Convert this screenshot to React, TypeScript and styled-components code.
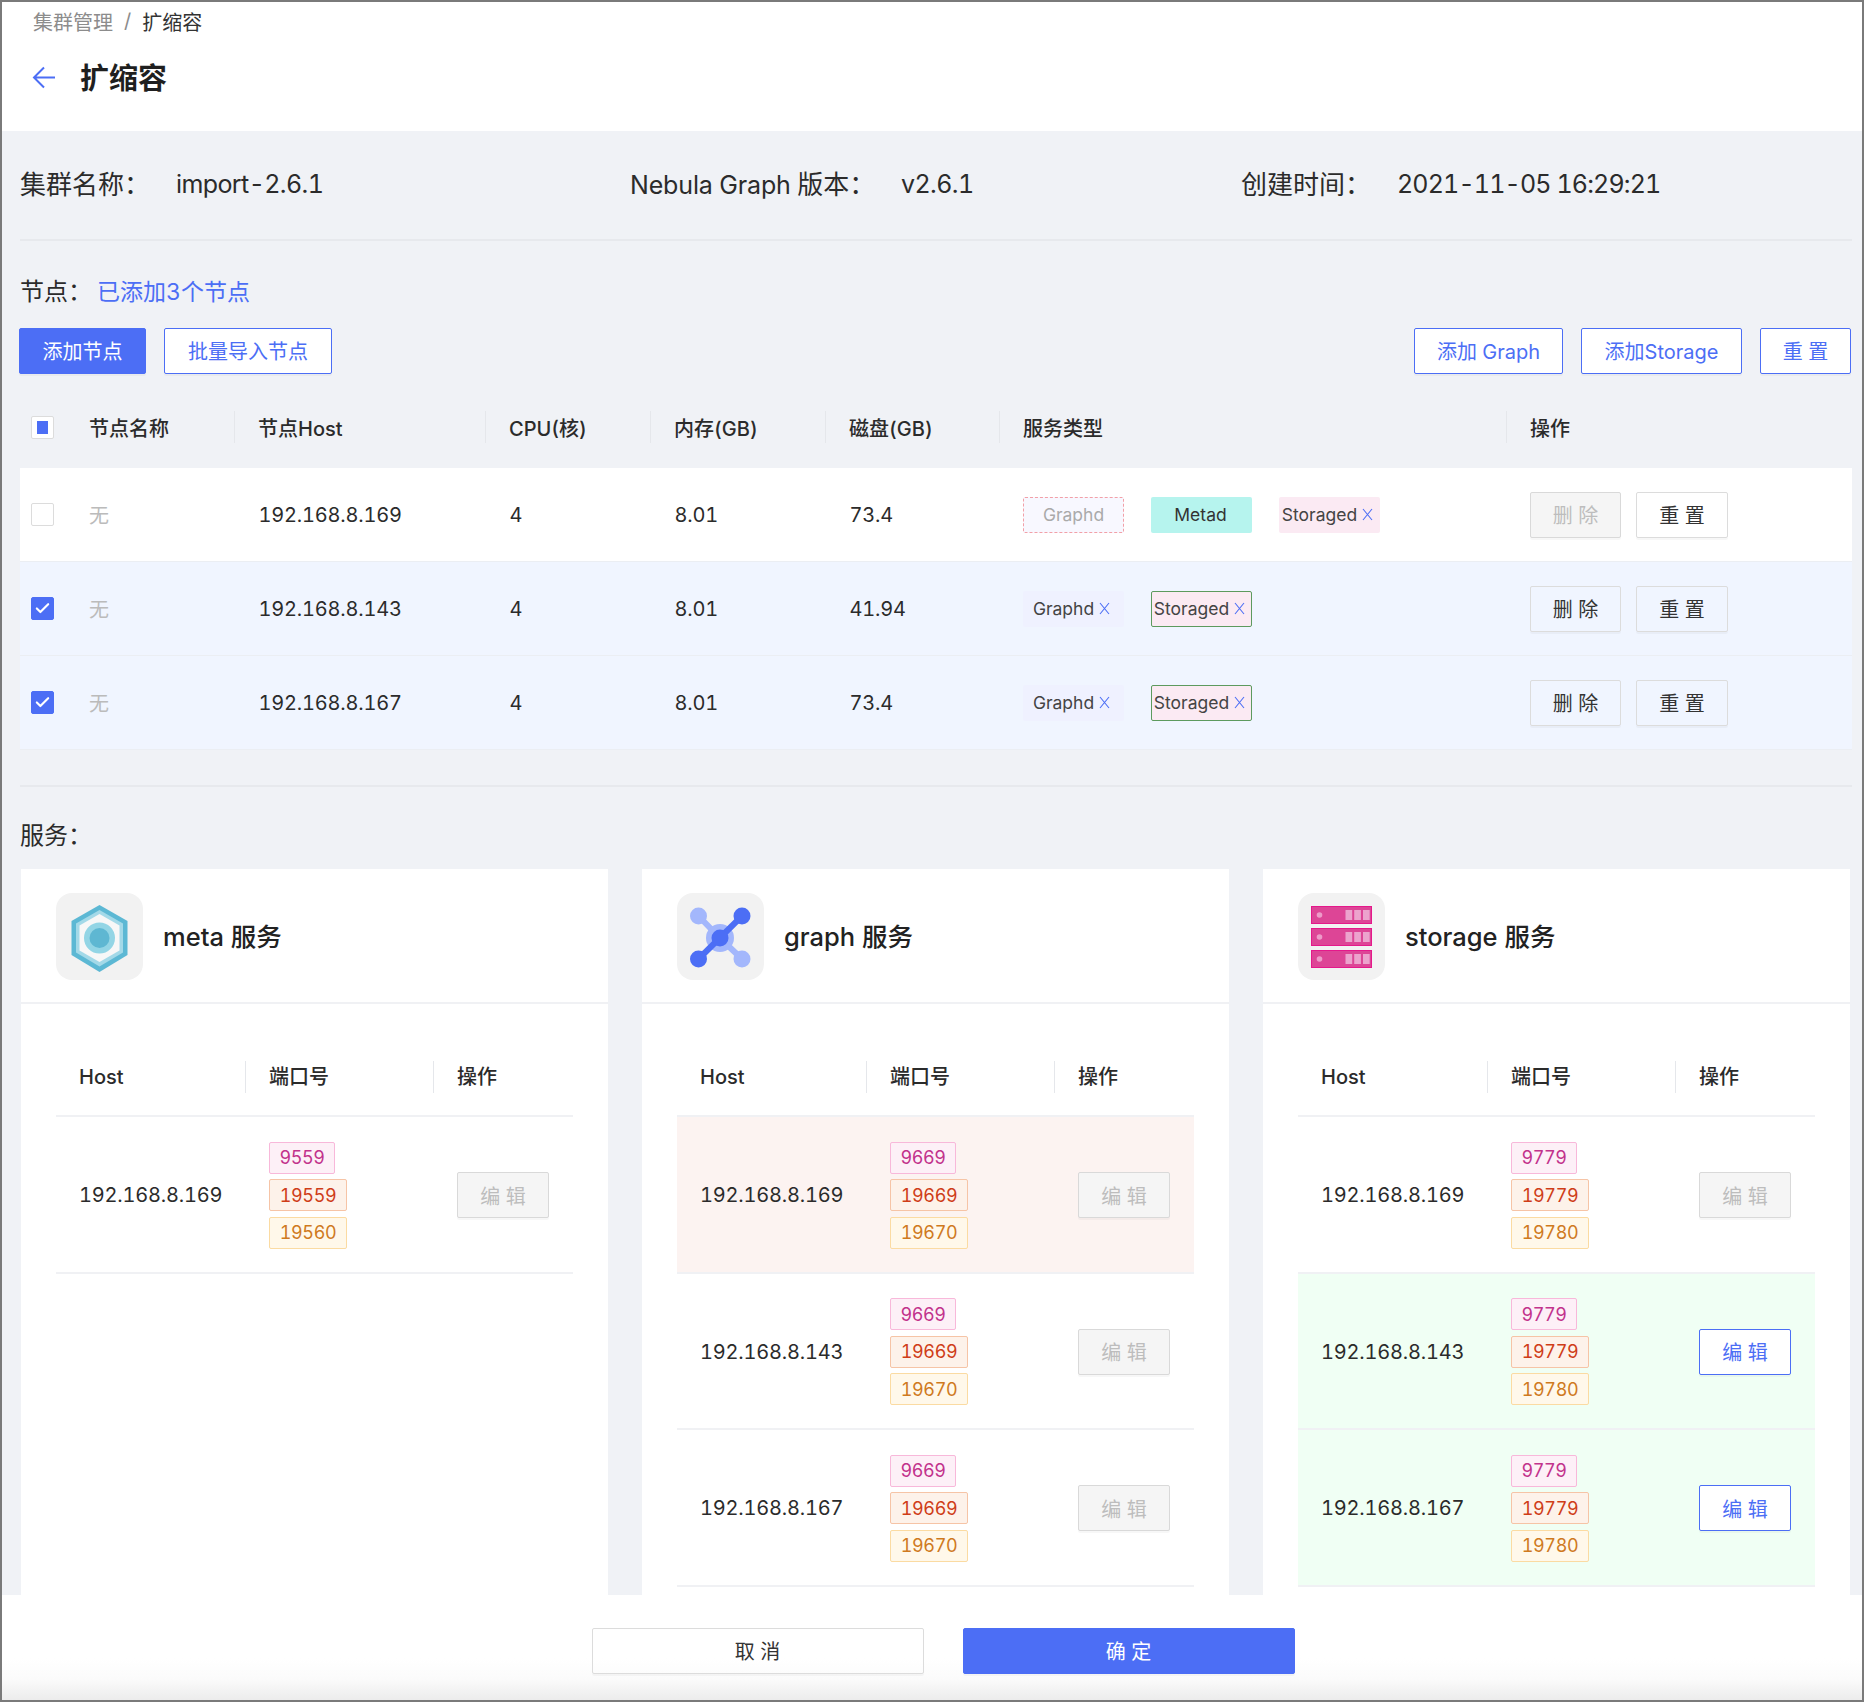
import React from "react";
import styled, { createGlobalStyle, css } from "styled-components";
import { Check } from "lucide-react";

const Global = createGlobalStyle`
  html, body { margin: 0; padding: 0; }
  body {
    font-family: Inter, "Noto Sans CJK SC", sans-serif; color: #222; background: #fff;
    font-variant-numeric: tabular-nums;
  }
  * { box-sizing: border-box; }
`;

const primary = "#4c6ef5";

const Page = styled.div`
  width: 1864px; height: 1702px; display: flex; flex-direction: column; overflow: hidden;
  border: 2px solid #7a7a7a; background: #fff;
`;
const Head = styled.header`height: 129px; flex: none; padding: 5px 0 0 31px; background: #fff;`;
const Crumbs = styled.div`display: flex; align-items: center; gap: 11px; height: 28px; font-size: 20px; color: #8c8c8c;`;
const CrumbNow = styled.span`color: #333;`;
const TitleRow = styled.div`display: flex; align-items: center; gap: 24px; margin-top: 23px; height: 42px;`;
const Title = styled.h1`margin: 0; font-size: 29px; font-weight: 600; color: #1f1f1f; line-height: 42px;`;

const Main = styled.main`
  flex: 1; min-height: 0; overflow: hidden; display: flex; flex-direction: column;
  background: #f0f2f6; padding: 0 10px 0 18px;
`;
const InfoRow = styled.section`
  flex: none; height: 110px; padding-bottom: 3px; display: grid; grid-template-columns: 610px 611px 1fr; align-items: center;
  border-bottom: 2px solid #e7e9ed; font-size: 26px; color: #2b2b2b;
`;
const InfoItem = styled.div`display: flex; align-items: center;`;
const InfoLabel = styled.span<{ $w: number }>`width: ${p => p.$w}px; flex: none; padding-bottom: 2px;`;
const InfoValue = styled.span<{ $tight?: boolean }>`font-size: 25px; letter-spacing: ${p => (p.$tight ? -0.85 : -0.6)}px;`;
const InfoLatin = styled.span`font-size: 25px; letter-spacing: -0.15px;`;
const SectionTitle = styled.div<{ $top: number }>`
  flex: none; margin-top: ${p => p.$top}px; height: 30px; line-height: 30px; font-size: 24px; color: #2b2b2b;
`;
const Accent = styled.span`color: ${primary}; font-size: 23px; margin-left: 5px;`;
const Toolbar = styled.div`
  flex: none; display: flex; justify-content: space-between; margin: 21px 0 0 -1px; padding-right: 1px;
  button { padding-bottom: 2px; }
`;
const ButtonGroup = styled.div<{ $gap: number }>`display: flex; gap: ${p => p.$gap}px;`;

const Btn = styled.button<{ $kind?: "primary" | "outline" | "plain" | "disabled"; $w: number }>`
  width: ${p => p.$w}px; height: 46px; padding: 0; border-radius: 2px; font: inherit; font-size: 20px; white-space: pre;
  box-shadow: 0 2px 0 rgba(0,0,0,.03);
  ${p => {
    switch (p.$kind) {
      case "primary": return css`background: ${primary}; border: 1px solid ${primary}; color: #fff;`;
      case "outline": return css`background: #fff; border: 1.5px solid ${primary}; color: ${primary};`;
      case "disabled": return css`background: #f5f5f5; border: 1.5px solid #d9d9d9; color: #bdbdbd;`;
      default: return css`background: transparent; border: 1.5px solid #dcdcdc; color: #333;`;
    }
  }}
`;

const nodeCols = "214px 251px 165px 175px 174px 507px 1fr";
const NodeHead = styled.div`
  flex: none; margin-top: 12px; height: 82px; display: grid; grid-template-columns: ${nodeCols}; align-items: center;
  font-size: 20px; font-weight: 500; color: #2b2b2b;
`;
const HeadCell = styled.div`
  height: 32px; line-height: 32px; padding-left: 23px; display: flex; align-items: center;
  border-left: 1px solid #e5e7eb;
`;
const NodeHeadCell = styled(HeadCell)`padding: 4px 0 0 23px;`;
const FirstCell = styled.div`display: flex; align-items: center; gap: 35px; padding-left: 11px;`;
const NodeRow = styled.div<{ $sel: boolean }>`
  flex: none; height: 94px; display: grid; grid-template-columns: ${nodeCols}; align-items: center;
  font-size: 20px; letter-spacing: -0.2px; color: #2b2b2b; background: ${p => (p.$sel ? "#f0f5ff" : "#fff")}; border-bottom: 1px solid #ebeef3;
`;
const Cell = styled.div`padding-left: 24.5px; display: flex; align-items: center;`;
const Muted = styled.span`color: #bbb; width: 20px;`;
const Box = styled.span<{ $on?: boolean }>`
  width: 23px; height: 23px; border-radius: 2px; display: flex; align-items: center; justify-content: center; flex: none;
  background: ${p => (p.$on ? primary : "#fff")}; border: 1.5px solid ${p => (p.$on ? primary : "#dcdcdc")};
`;
const BoxDot = styled.span`width: 11px; height: 13px; background: ${primary};`;
const Tags = styled.div`padding-left: 24px; display: flex; gap: 27px;`;
const Tag = styled.span<{ $kind: "ghost" | "meta" | "graph" | "storage" | "storageOn" }>`
  width: 101px; height: 36px; display: flex; align-items: center; justify-content: center; gap: 5px;
  font-size: 17.5px; letter-spacing: 0; border-radius: 2px; color: #444;
  ${p => {
    switch (p.$kind) {
      case "ghost": return css`background: #f8f8ff; border: 1.5px dashed #f2a0a8; color: #aaa;`;
      case "meta": return css`background: #b6f4ee; color: #333; padding-right: 2px;`;
      case "graph": return css`background: #eff1ff;`;
      case "storage": return css`background: #fbeaf3;`;
      default: return css`background: #fbeaf3; border: 1.5px solid #5d9a5e;`;
    }
  }}
`;
const Ops = styled.div`padding-left: 24px; display: flex; gap: 15px;`;
const Rule = styled.div`flex: none; margin-top: 35px; height: 2px; background: #e7e9ed;`;

const Cards = styled.section`flex: 1; min-height: 0; margin: 18px 0 0 1px; display: grid; grid-template-columns: repeat(3, 587px); gap: 34px;`;
const Card = styled.article`background: #fff; min-height: 0; overflow: hidden;`;
const CardHead = styled.div`height: 135px; padding: 24px 35px 0; display: flex; gap: 20px; border-bottom: 2px solid #f0f1f4;`;
const Logo = styled.div`width: 87px; height: 87px; border-radius: 16px; background: #f2f2f2; flex: none;`;
const LogoSvg = styled.svg`display: block;`;
const CardTitle = styled.div`height: 87px; line-height: 87px; font-size: 25.5px; font-weight: 500; color: #222;`;
const CardBody = styled.div`padding: 34px 35px 0;`;
const svcCols = "189px 188px 1fr";
const SvcHead = styled.div`
  height: 79px; display: grid; grid-template-columns: ${svcCols}; align-items: center; font-size: 20px; font-weight: 500;
  border-bottom: 2px solid #f0f1f4; color: #2b2b2b;
`;
const SvcRow = styled.div<{ $tone?: "none" | "pink" | "green" }>`
  height: 156.6px; padding-top: 2px; display: grid; grid-template-columns: ${svcCols}; align-items: center; font-size: 20px; letter-spacing: -0.2px; color: #2b2b2b;
  border-bottom: 2px solid #f0f1f4;
  background: ${p => (p.$tone === "pink" ? "#fcf3f1" : p.$tone === "green" ? "#f0fff4" : "#fff")};
`;
const SvcCell = styled.div`padding-left: 23px;`;
const EditCell = styled.div`padding-left: 24px;`;
const Ports = styled.div`display: flex; flex-direction: column; align-items: flex-start; gap: 5.5px; padding-left: 24px;`;
const Port = styled.span<{ $c: "pink" | "orange" | "yellow"; $w: number }>`
  width: ${p => p.$w}px; height: 32px; display: flex; align-items: center; justify-content: center; font-size: 18px; letter-spacing: -0.4px; border-radius: 2px;
  ${p => p.$c === "pink"
    ? css`background: #fdf0f7; border: 1.5px solid #f8b8da; color: #c2338c;`
    : p.$c === "orange"
      ? css`background: #fdf2ea; border: 1.5px solid #f6c4a6; color: #cf3d18;`
      : css`background: #fff8ea; border: 1.5px solid #fbdba2; color: #cf7a1e;`}
`;

const Footer = styled.footer`
  flex: none; height: 105px; display: flex; justify-content: center; gap: 39px; padding: 33px 0 0 22px;
  background: linear-gradient(to bottom, #fff 0, #fff 60%, #fbfbfb 80%, #ececec 100%);
  button { padding-bottom: 2px; }
`;

const CloseX = styled.svg`flex: none; margin-right: 4px;`;
const X = () => (
  <CloseX width="11" height="13" viewBox="0 0 11 13" fill="none" stroke={primary} strokeWidth="1.1">
    <path d="M1 1l9 11M10 1L1 12" />
  </CloseX>
);

const BackSvg = styled.svg`flex: none; margin: -4px 0 0 -1px;`;
const BackArrow = () => (
  <BackSvg width="24" height="24" viewBox="0 0 24 24" fill="none" stroke={primary} strokeWidth="2">
    <path d="M23 12.5H2M12 2.5 2 12.5l10 10" />
  </BackSvg>
);

const MetaIcon = () => (
  <LogoSvg width="87" height="87" viewBox="0 0 87 87">
    <polygon points="43.5,12 71.5,28 71.5,62 43.5,79 15.5,62 15.5,28" fill="#5cb8d4" />
    <polygon points="43.5,17 67,30.5 67,59.5 43.5,73.5 20,59.5 20,30.5" fill="#a3d9e8" />
    <polygon points="43.5,21 63.5,32.5 63.5,57.5 43.5,69 23.5,57.5 23.5,32.5" fill="#f7f7f7" />
    <circle cx="43.5" cy="45" r="15.5" fill="#93d5e5" />
    <circle cx="43.5" cy="45" r="10" fill="#5eb7d2" />
  </LogoSvg>
);

const GraphIcon = () => (
  <LogoSvg width="87" height="87" viewBox="0 0 87 87">
    <path d="M21.5 23 43 45 65 66" stroke="#a3b7fc" strokeWidth="6" fill="none" />
    <circle cx="21.5" cy="23" r="8.5" fill="#a3b7fc" />
    <circle cx="65" cy="66" r="8.5" fill="#a3b7fc" />
    <circle cx="43" cy="45" r="14" fill="#a3b7fc" />
    <path d="M65 23 21.5 66" stroke={primary} strokeWidth="6" fill="none" />
    <circle cx="65" cy="23" r="8.5" fill={primary} />
    <circle cx="21.5" cy="66" r="8.5" fill={primary} />
    <circle cx="43" cy="45" r="8.5" fill={primary} />
  </LogoSvg>
);

const StorageIcon = () => (
  <LogoSvg width="87" height="87" viewBox="0 0 87 87">
    {[13, 35, 57].map(y => (
      <g key={y}>
        <rect x="13.5" y={y + 0.5} width="60" height="17" fill="#dd4596" stroke="#e5188b" />
        <circle cx="21.5" cy={y + 9} r="2.8" fill="#ee9ac9" />
        {[47.5, 56.2, 65].map(x => (
          <rect key={x} x={x} y={y + 4} width="6.7" height="10" fill="#eca3cd" />
        ))}
      </g>
    ))}
  </LogoSvg>
);

type NodeData = {
  ip: string; disk: string; sel: boolean;
  tags: { name: string; kind: "ghost" | "meta" | "graph" | "storage" | "storageOn"; close?: boolean }[];
};
const nodes: NodeData[] = [
  { ip: "192.168.8.169", disk: "73.4", sel: false, tags: [
    { name: "Graphd", kind: "ghost" }, { name: "Metad", kind: "meta" }, { name: "Storaged", kind: "storage", close: true },
  ] },
  { ip: "192.168.8.143", disk: "41.94", sel: true, tags: [
    { name: "Graphd", kind: "graph", close: true }, { name: "Storaged", kind: "storageOn", close: true },
  ] },
  { ip: "192.168.8.167", disk: "73.4", sel: true, tags: [
    { name: "Graphd", kind: "graph", close: true }, { name: "Storaged", kind: "storageOn", close: true },
  ] },
];

type Svc = {
  name: string; Icon: React.FC; ports: [string, string, string];
  rows: { ip: string; tone?: "none" | "pink" | "green"; edit?: boolean }[];
};
const services: Svc[] = [
  { name: "meta 服务", Icon: MetaIcon, ports: ["9559", "19559", "19560"], rows: [{ ip: "192.168.8.169" }] },
  { name: "graph 服务", Icon: GraphIcon, ports: ["9669", "19669", "19670"], rows: [
    { ip: "192.168.8.169", tone: "pink" }, { ip: "192.168.8.143" }, { ip: "192.168.8.167" },
  ] },
  { name: "storage 服务", Icon: StorageIcon, ports: ["9779", "19779", "19780"], rows: [
    { ip: "192.168.8.169" }, { ip: "192.168.8.143", tone: "green", edit: true }, { ip: "192.168.8.167", tone: "green", edit: true },
  ] },
];

export default function App() {
  return (
    <Page>
      <Global />
      <Head>
        <Crumbs><span>集群管理</span><span>/</span><CrumbNow>扩缩容</CrumbNow></Crumbs>
        <TitleRow><BackArrow /><Title>扩缩容</Title></TitleRow>
      </Head>
      <Main>
        <InfoRow>
          <InfoItem><InfoLabel $w={156}>集群名称：</InfoLabel><InfoValue>import-2.6.1</InfoValue></InfoItem>
          <InfoItem><InfoLabel $w={271}><InfoLatin>Nebula Graph </InfoLatin>版本：</InfoLabel><InfoValue>v2.6.1</InfoValue></InfoItem>
          <InfoItem><InfoLabel $w={156}>创建时间：</InfoLabel><InfoValue $tight>2021-11-05 16:29:21</InfoValue></InfoItem>
        </InfoRow>
        <SectionTitle $top={36}>节点：<Accent>已添加3个节点</Accent></SectionTitle>
        <Toolbar>
          <ButtonGroup $gap={18}>
            <Btn $kind="primary" $w={127}>添加节点</Btn>
            <Btn $kind="outline" $w={168}>批量导入节点</Btn>
          </ButtonGroup>
          <ButtonGroup $gap={18}>
            <Btn $kind="outline" $w={149}>添加 Graph</Btn>
            <Btn $kind="outline" $w={161}>添加Storage</Btn>
            <Btn $kind="outline" $w={91}>重 置</Btn>
          </ButtonGroup>
        </Toolbar>
        <NodeHead>
          <FirstCell><Box><BoxDot /></Box><span>节点名称</span></FirstCell>
          {["节点Host", "CPU(核)", "内存(GB)", "磁盘(GB)", "服务类型", "操作"].map(h => <NodeHeadCell key={h}>{h}</NodeHeadCell>)}
        </NodeHead>
        {nodes.map(n => (
          <NodeRow key={n.ip} $sel={n.sel}>
            <FirstCell>
              <Box $on={n.sel}>{n.sel && <Check size={17} color="#fff" strokeWidth={3} />}</Box>
              <Muted>无</Muted>
            </FirstCell>
            <Cell>{n.ip}</Cell>
            <Cell>4</Cell>
            <Cell>8.01</Cell>
            <Cell>{n.disk}</Cell>
            <Tags>
              {n.tags.map(t => <Tag key={t.name} $kind={t.kind}>{t.name}{t.close && <X />}</Tag>)}
            </Tags>
            <Ops>
              <Btn $kind={n.sel ? "plain" : "disabled"} $w={91}>删 除</Btn>
              <Btn $kind="plain" $w={92}>重 置</Btn>
            </Ops>
          </NodeRow>
        ))}
        <Rule />
        <SectionTitle $top={34}>服务：</SectionTitle>
        <Cards>
          {services.map(s => (
            <Card key={s.name}>
              <CardHead>
                <Logo><s.Icon /></Logo>
                <CardTitle>{s.name}</CardTitle>
              </CardHead>
              <CardBody>
                <SvcHead>
                  <SvcCell>Host</SvcCell>
                  <HeadCell>端口号</HeadCell>
                  <HeadCell>操作</HeadCell>
                </SvcHead>
                {s.rows.map(r => (
                  <SvcRow key={r.ip} $tone={r.tone}>
                    <SvcCell>{r.ip}</SvcCell>
                    <Ports>
                      <Port $c="pink" $w={66}>{s.ports[0]}</Port>
                      <Port $c="orange" $w={78}>{s.ports[1]}</Port>
                      <Port $c="yellow" $w={78}>{s.ports[2]}</Port>
                    </Ports>
                    <EditCell>
                      <Btn $kind={r.edit ? "outline" : "disabled"} $w={92}>编 辑</Btn>
                    </EditCell>
                  </SvcRow>
                ))}
              </CardBody>
            </Card>
          ))}
        </Cards>
      </Main>
      <Footer>
        <Btn $kind="plain" $w={332}>取 消</Btn>
        <Btn $kind="primary" $w={332}>确 定</Btn>
      </Footer>
    </Page>
  );
}
